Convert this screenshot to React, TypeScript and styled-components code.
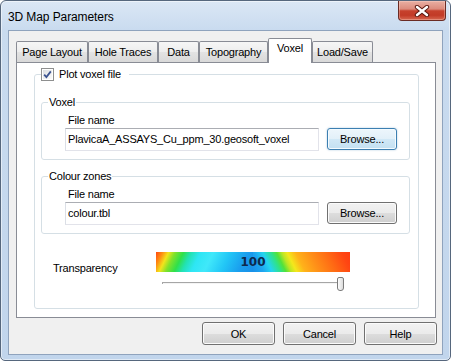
import styled, { createGlobalStyle } from "styled-components";

const GlobalStyle = createGlobalStyle`
  * {
    box-sizing: border-box;
  }

  html,
  body {
    margin: 0;
    padding: 0;
    background: #ffffff;
  }

  body {
    font-family: "Liberation Sans", Arial, sans-serif;
    font-size: 11px;
    letter-spacing: -0.2px;
    color: #000000;
  }
`;

const tabs = [
  { label: "Page Layout", width: 72 },
  { label: "Hole Traces", width: 70 },
  { label: "Data", width: 41 },
  { label: "Topography", width: 69 },
  { label: "Voxel", width: 44 },
  { label: "Load/Save", width: 61 },
];

const activeTab = "Voxel";
const transparency = 100;
const TRACK_WIDTH = 182;
const THUMB_WIDTH = 7;

const Window = styled.div`
  width: 451px;
  height: 361px;
  display: flex;
  flex-direction: column;
  padding-bottom: 5px;
  border: 1px solid #56677d;
  border-radius: 6px 6px 5px 5px;
  background: linear-gradient(#dbe7f5 0px, #c9dbef 29px, #c1d5ec 100%);
  box-shadow: inset 0 0 0 1px rgba(255, 255, 255, 0.5);
  overflow: hidden;
`;

const TitleBar = styled.div`
  height: 29px;
  display: flex;
  justify-content: space-between;
  align-items: flex-start;
`;

const Title = styled.span`
  margin: 9px 0 0 7px;
  font-size: 12px;
  line-height: 14px;
  letter-spacing: -0.1px;
`;

const CloseButton = styled.div`
  width: 48px;
  height: 20px;
  margin-right: 4px;
  display: flex;
  align-items: center;
  justify-content: center;
  border: 1px solid #6a2b24;
  border-top: none;
  border-radius: 0 0 4px 4px;
  background: linear-gradient(
    #e9afa3 0%,
    #dc8b7d 42%,
    #c6412d 52%,
    #c23a27 75%,
    #d66750 100%
  );
  box-shadow: inset 0 0 0 1px rgba(255, 220, 210, 0.35);
`;

const Client = styled.div`
  flex: 1;
  margin: 0 7px;
  display: flex;
  flex-direction: column;
  padding: 7px 6px 0 7px;
  border: 1px solid #8fa3bd;
  background: #f0f0f0;
`;

const TabStrip = styled.div`
  height: 24px;
  display: flex;
  align-items: flex-end;
  position: relative;
  z-index: 1;
`;

const Tab = styled.div<{ $selected: boolean; $width: number }>`
  width: ${({ $width }) => $width}px;
  height: ${({ $selected }) => ($selected ? 25 : 21)}px;
  margin-bottom: ${({ $selected }) => ($selected ? -1 : 0)}px;
  padding-bottom: ${({ $selected }) => ($selected ? 6 : 0)}px;
  display: flex;
  align-items: center;
  justify-content: center;
  border: 1px solid #898c95;
  border-bottom: none;
  border-radius: 2px 2px 0 0;
  line-height: 13px;
  white-space: nowrap;
  background: ${({ $selected }) =>
    $selected
      ? "#ffffff"
      : "linear-gradient(#f6f6f6 0%, #ededed 50%, #e3e3e3 51%, #d9d9d9 100%)"};
`;

const TabPanel = styled.div`
  height: 256px;
  display: flex;
  flex-direction: column;
  padding: 4px 16px 8px 17px;
  border: 1px solid #898c95;
  background: #ffffff;
`;

const OuterGroup = styled.fieldset`
  flex: 1;
  min-width: 0;
  margin: 0;
  padding: 14px 8px 0 6px;
  border: 1px solid #d5dfe5;
  border-radius: 3px;
`;

const CheckLegend = styled.legend`
  padding: 0 8px 0 0;
  height: 15px;
`;

const CheckLabel = styled.span`
  display: inline-flex;
  align-items: center;
  gap: 5px;
  height: 15px;
  line-height: 15px;
`;

const CheckBox = styled.span`
  width: 13px;
  height: 13px;
  display: flex;
  align-items: center;
  justify-content: center;
  border: 1px solid #8e8f8f;
  background: #f4f4f4;
  box-shadow: inset 0 0 0 1px #ffffff;

  svg {
    display: block;
    background: linear-gradient(135deg, #dcdee1, #fbfbfb);
  }
`;

const FileGroup = styled.fieldset<{ $first?: boolean }>`
  min-width: 0;
  margin: ${({ $first }) => ($first ? 0 : 10)}px 0 0;
  padding: 5px 12px 8px 6px;
  border: 1px solid #d5dfe5;
  border-radius: 3px;
`;

const GroupLegend = styled.legend`
  padding: 0 1px;
  line-height: 13px;
`;

const FieldBody = styled.div`
  padding-left: 17px;
`;

const FieldLabel = styled.div`
  margin: 0 0 1px 3px;
  line-height: 13px;
`;

const FieldRow = styled.div`
  display: flex;
  align-items: flex-start;
  gap: 8px;
`;

const TextBox = styled.input`
  flex: 1;
  min-width: 0;
  height: 23px;
  margin: 0;
  padding: 0 2px 2px;
  border: 1px solid #e2e3ea;
  border-top-color: #abadb3;
  border-left-color: #dbdfe6;
  background: #ffffff;
  font: inherit;
  letter-spacing: inherit;
  color: #000000;
  outline: none;
`;

const PushButton = styled.button<{ $width: number; $height: number; $focused?: boolean }>`
  width: ${({ $width }) => $width}px;
  height: ${({ $height }) => $height}px;
  margin: 0;
  padding: 0;
  flex-shrink: 0;
  border: 1px solid ${({ $focused }) => ($focused ? "#3c7fb1" : "#707070")};
  border-radius: 3px;
  background: ${({ $focused }) =>
    $focused
      ? "linear-gradient(#edf6fc 0%, #e2f0f9 50%, #d1e8f6 51%, #c3e0f2 100%)"
      : "linear-gradient(#f2f2f2 0%, #ebebeb 50%, #dddddd 51%, #cfcfcf 100%)"};
  box-shadow: ${({ $focused }) =>
    $focused
      ? "inset 0 0 0 1px #f4fbff, 0 0 2px rgba(60, 127, 177, 0.45)"
      : "inset 0 0 0 1px #fbfbfb"};
  font: inherit;
  letter-spacing: inherit;
  color: #000000;
`;

const TransparencyRow = styled.div`
  margin-top: 18px;
  padding-left: 12px;
  display: flex;
  align-items: flex-start;
`;

const TransparencyLabel = styled.div`
  width: 103px;
  margin-top: 10px;
  line-height: 13px;
`;

const SliderColumn = styled.div`
  display: flex;
  flex-direction: column;
`;

const ColourBar = styled.div`
  width: 194px;
  height: 20px;
  text-align: center;
  font-family: "DejaVu Sans", Verdana, sans-serif;
  font-size: 12px;
  font-weight: bold;
  line-height: 20px;
  letter-spacing: 0;
  color: #0d2a4e;
  background:
    linear-gradient(
        116deg,
        #ff4812 0%,
        #ff8a12 6%,
        #f2e41c 12%,
        #82e22a 18%,
        #2fe04a 26%,
        #22e2b2 33%,
        #2ee6f4 42%,
        #40e8fa 54%,
        #22c6f6 70%,
        #1a9eee 86%,
        #1890e8 100%
      )
      left / 50% 100% no-repeat,
    linear-gradient(
        64deg,
        #1890e8 0%,
        #1ea6f0 10%,
        #24d4f0 18%,
        #2ee28a 26%,
        #52e23a 31%,
        #bce624 36%,
        #f4e81c 41%,
        #ffb21a 49%,
        #ff9018 62%,
        #ff6a14 78%,
        #ff4612 92%,
        #ff3c10 100%
      )
      right / 50% 100% no-repeat;
`;

const Slider = styled.div`
  position: relative;
  width: ${TRACK_WIDTH}px;
  height: 14px;
  margin: 5px 0 0 6px;
`;

const SliderTrack = styled.div`
  position: absolute;
  top: 5px;
  left: 0;
  right: 0;
  height: 2px;
  border-top: 1px solid #a6a6a6;
  border-left: 1px solid #a6a6a6;
  background: #f4f4f4;
`;

const SliderThumb = styled.div`
  position: absolute;
  top: 0;
  width: ${THUMB_WIDTH}px;
  height: 14px;
  border: 1px solid #7b7b7b;
  border-radius: 2px 2px 3px 3px;
  background: linear-gradient(to right, #fdfdfd, #dcdcdc);
`;

const ButtonRow = styled.div`
  margin: 4px -1px 0 0;
  display: flex;
  justify-content: flex-end;
  gap: 8px;
`;

function CloseGlyph() {
  return (
    <svg width="16" height="12" viewBox="0 0 16 12">
      <path
        d="M3 2 L13 10 M13 2 L3 10"
        stroke="#5b1a12"
        strokeWidth="4.4"
        strokeLinecap="round"
      />
      <path
        d="M3 2 L13 10 M13 2 L3 10"
        stroke="#ffffff"
        strokeWidth="2.4"
        strokeLinecap="round"
      />
    </svg>
  );
}

function CheckMark() {
  return (
    <svg width="9" height="9" viewBox="0 0 9 9">
      <path
        d="M1.2 4.6 L3.4 7 L7.8 1.4"
        fill="none"
        stroke="#3c5391"
        strokeWidth="1.8"
      />
    </svg>
  );
}

function FileField({
  title,
  fileName,
  focused,
  first,
}: {
  title: string;
  fileName: string;
  focused?: boolean;
  first?: boolean;
}) {
  return (
    <FileGroup $first={first}>
      <GroupLegend>{title}</GroupLegend>
      <FieldBody>
        <FieldLabel>File name</FieldLabel>
        <FieldRow>
          <TextBox readOnly value={fileName} />
          <PushButton $width={70} $height={22} $focused={focused}>
            Browse...
          </PushButton>
        </FieldRow>
      </FieldBody>
    </FileGroup>
  );
}

export default function App() {
  const thumbLeft = (transparency / 100) * (TRACK_WIDTH - THUMB_WIDTH);

  return (
    <>
      <GlobalStyle />
      <Window>
        <TitleBar>
          <Title>3D Map Parameters</Title>
          <CloseButton>
            <CloseGlyph />
          </CloseButton>
        </TitleBar>

        <Client>
          <TabStrip>
            {tabs.map((tab) => (
              <Tab
                key={tab.label}
                $width={tab.width}
                $selected={tab.label === activeTab}
              >
                {tab.label}
              </Tab>
            ))}
          </TabStrip>

          <TabPanel>
            <OuterGroup>
              <CheckLegend>
                <CheckLabel>
                  <CheckBox>
                    <CheckMark />
                  </CheckBox>
                  Plot voxel file
                </CheckLabel>
              </CheckLegend>

              <FileField
                first
                focused
                title="Voxel"
                fileName="PlavicaA_ASSAYS_Cu_ppm_30.geosoft_voxel"
              />
              <FileField title="Colour zones" fileName="colour.tbl" />

              <TransparencyRow>
                <TransparencyLabel>Transparency</TransparencyLabel>
                <SliderColumn>
                  <ColourBar>{transparency}</ColourBar>
                  <Slider>
                    <SliderTrack />
                    <SliderThumb style={{ left: thumbLeft }} />
                  </Slider>
                </SliderColumn>
              </TransparencyRow>
            </OuterGroup>
          </TabPanel>

          <ButtonRow>
            <PushButton $width={73} $height={23}>
              OK
            </PushButton>
            <PushButton $width={73} $height={23}>
              Cancel
            </PushButton>
            <PushButton $width={73} $height={23}>
              Help
            </PushButton>
          </ButtonRow>
        </Client>
      </Window>
    </>
  );
}
